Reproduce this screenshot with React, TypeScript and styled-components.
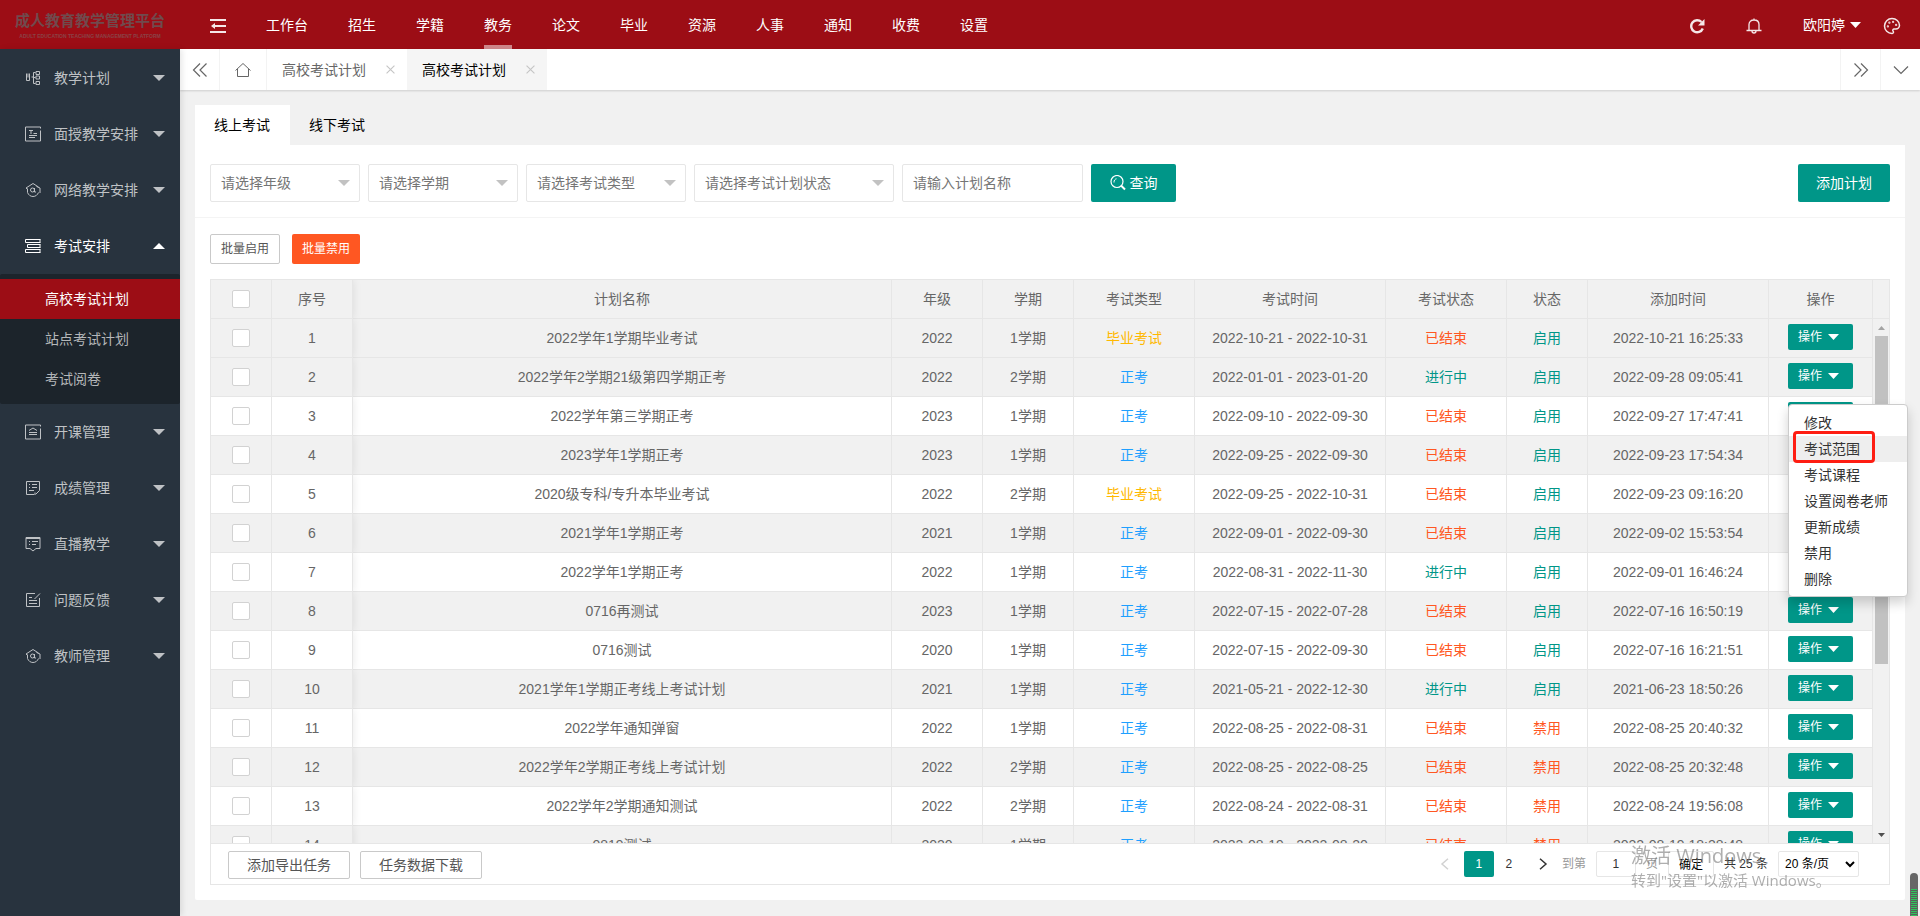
import React from "react";
import styled, { createGlobalStyle, css } from "styled-components";
import { Palette } from "lucide-react";

const RED = "#9c0d15";
const GREEN = "#009688";
const ORANGE = "#ff5722";
const BLUE = "#1e9fff";
const YELLOW = "#ffb800";
const LINE = "#e6e6e6";

const GlobalStyle = createGlobalStyle`
  * { box-sizing: border-box; }
  body {
    margin: 0;
    font: 14px/24px "Liberation Sans", "Noto Sans CJK SC", sans-serif;
    color: #333;
    background: #f1f1f1;
  }
  button, input, select { font: inherit; color: inherit; margin: 0; }
  button { padding: 0; border: 0; background: none; cursor: pointer; white-space: nowrap; }
  a { color: inherit; text-decoration: none; }
  ul { list-style: none; margin: 0; padding: 0; }
`;

const Page = styled.div`
  display: grid;
  grid-template: 49px minmax(0, 1fr) / 180px minmax(0, 1fr);
  height: 100vh;
  min-height: 640px;
`;

const Logo = styled.div`
  background: ${RED};
  color: #704a4d;
  text-align: center;
  padding-top: 11px;
  white-space: nowrap;
  overflow: hidden;
`;
const LogoTitle = styled.div`
  font-size: 15px;
  line-height: 20px;
  font-weight: 700;
`;
const LogoSub = styled.div`
  font-size: 5px;
  line-height: 10px;
  font-weight: 700;
  color: #8a4347;
`;

const Header = styled.header`
  background: ${RED};
  color: #f5e7e8;
  display: flex;
  align-items: stretch;
  justify-content: space-between;
  padding: 0 19px 0 20px;
`;
const HeaderGroup = styled.div`
  display: flex;
  align-items: stretch;
`;
const Fold = styled.button`
  width: 46px;
  padding: 2px 10px 0;
  text-align: left;
  svg { display: block; }
`;
const TopNav = styled.nav`
  display: flex;
`;
const TopLink = styled.a<{ $active?: boolean }>`
  margin: 0 20px;
  padding-top: 13px;
  color: #fff;
  border-bottom: 4px solid ${(p) => (p.$active ? "#cd8689" : "transparent")};
`;
const Tools = styled.div`
  display: flex;
  align-items: center;
  padding-top: 3px;
  gap: 41px;
  svg { display: block; }
`;
const User = styled.button`
  display: flex;
  align-items: center;
  gap: 5px;
  color: #fff;
  padding-bottom: 3px;
`;
const Account = styled.div`
  display: flex;
  align-items: center;
  gap: 22px;
`;

const Side = styled.aside`
  background: #28333e;
  padding-top: 1px;
  overflow: hidden;
  box-shadow: 2px 0 6px rgba(0, 0, 0, 0.1);
  z-index: 1;
`;
const SideItem = styled.a<{ $open?: boolean }>`
  display: grid;
  grid-template-columns: 16px 1fr auto;
  column-gap: 13px;
  align-items: center;
  height: 56px;
  padding: 0 15px 0 25px;
  color: ${(p) => (p.$open ? "#fff" : "#bfc2c5")};
  svg { display: block; }
`;
const SubMenu = styled.ul`
  background: #1c242b;
  padding: 5px 0;
  border-radius: 2px;
`;
const SubLink = styled.a<{ $active?: boolean }>`
  display: block;
  line-height: 40px;
  padding-left: 45px;
  color: ${(p) => (p.$active ? "#fff" : "#b4b7b9")};
  background: ${(p) => (p.$active ? RED : "transparent")};
`;

const Main = styled.main`
  display: flex;
  flex-direction: column;
  min-width: 0;
  min-height: 0;
`;
const PageTabs = styled.div`
  display: flex;
  height: 41px;
  flex: none;
  background: #fff;
  box-shadow: 0 1px 2px rgba(0, 0, 0, 0.15);
`;
const TabIcon = styled.button<{ $w: number; $left?: boolean }>`
  width: ${(p) => p.$w}px;
  display: flex;
  align-items: center;
  justify-content: center;
  color: #666;
  ${(p) => (p.$left ? "border-left" : "border-right")}: 1px solid #f3f3f3;
`;
const PageTab = styled.div<{ $active?: boolean }>`
  display: flex;
  align-items: center;
  gap: 20px;
  padding: 0 12px 0 15px;
  color: ${(p) => (p.$active ? "#000" : "#666")};
  background: ${(p) => (p.$active ? "#f5f5f5" : "#fff")};
`;
const Close = styled.button`
  color: #c5c5c5;
  svg { display: block; }
`;
const Spacer = styled.div`
  flex: 1;
`;

const Content = styled.div`
  flex: 1;
  min-height: 0;
  display: flex;
  flex-direction: column;
  padding: 15px 15px 16px;
`;
const ExamTabs = styled.div`
  display: flex;
  flex: none;
`;
const ExamTab = styled.button<{ $active?: boolean }>`
  height: 40px;
  padding: 0 20px 0 19px;
  color: #000;
  background: ${(p) => (p.$active ? "#fff" : "transparent")};
`;
const Card = styled.section`
  position: relative;
  flex: 1;
  min-height: 0;
  display: flex;
  flex-direction: column;
  background: #fff;
  border-radius: 0 0 2px 2px;
`;
const Filters = styled.form`
  display: flex;
  gap: 8px;
  padding: 19px 15px 15px;
  border-bottom: 1px solid #f4f4f4;
`;
const SelectBox = styled.div<{ $w: number }>`
  display: grid;
  align-items: center;
  width: ${(p) => p.$w}px;
  > * { grid-area: 1 / 1; }
  svg { justify-self: end; margin-right: 10px; color: #c2c2c2; pointer-events: none; }
`;
const field = css`
  height: 38px;
  width: 100%;
  padding: 0 10px;
  border: 1px solid ${LINE};
  border-radius: 2px;
  background: #fff;
  color: #757575;
  outline: 0;
`;
const FilterSelect = styled.select`
  ${field}
  appearance: none;
`;
const FilterInput = styled.input`
  ${field}
  width: 181px;
  &::placeholder { color: #757575; opacity: 1; }
`;
const Primary = styled.button<{ $w: number }>`
  display: flex;
  align-items: center;
  justify-content: center;
  gap: 4px;
  height: 38px;
  width: ${(p) => p.$w}px;
  border-radius: 2px;
  background: ${GREEN};
  color: #fff;
`;

const Batch = styled.div`
  display: flex;
  gap: 12px;
  padding: 16px 15px 15px;
`;
const BatchButton = styled.button<{ $danger?: boolean }>`
  height: 30px;
  padding: 0 10px;
  font-size: 12px;
  border-radius: 2px;
  ${(p) =>
    p.$danger
      ? css`background: ${ORANGE}; color: #fff;`
      : css`border: 1px solid #c9c9c9; color: #555;`}
`;

const Grid = styled.div`
  flex: 1;
  min-height: 0;
  margin: 0 15px 15px;
  border: 1px solid ${LINE};
  display: flex;
  flex-direction: column;
`;
const GridBody = styled.div`
  flex: 1;
  min-height: 0;
  display: flex;
`;
const TableClip = styled.div`
  flex: 1;
  min-width: 0;
  overflow: hidden;
`;
const Table = styled.table`
  width: 100%;
  table-layout: fixed;
  border-collapse: separate;
  border-spacing: 0;
  color: #666;
`;
const Col = styled.col<{ $w?: number }>`
  width: ${(p) => (p.$w ? p.$w + "px" : "auto")};
`;
const Row = styled.tr<{ $shade?: boolean }>`
  background: ${(p) => (p.$shade ? "#f1f1f1" : "#fff")};
`;
const cell = css<{ $pinned?: boolean }>`
  height: 39px;
  padding: 0;
  border-right: 1px solid ${LINE};
  border-bottom: 1px solid ${LINE};
  font-weight: 400;
  text-align: center;
  white-space: nowrap;
  ${(p) =>
    p.$pinned &&
    css`
      box-shadow: 1px 0 8px rgba(0, 0, 0, 0.08);
      clip-path: inset(0 -12px 0 0);
    `}
`;
const Th = styled.th`${cell}`;
const Td = styled.td<{ $color?: string }>`
  ${cell}
  color: ${(p) => p.$color || "#666"};
`;
const Check = styled.input`
  appearance: none;
  display: block;
  width: 18px;
  height: 18px;
  margin: 0 auto;
  border: 1px solid #d2d2d2;
  border-radius: 2px;
  background: #fff;
`;
const RowAction = styled.button`
  display: flex;
  align-items: center;
  justify-content: space-between;
  width: 65px;
  height: 26px;
  margin: 0 auto 2px;
  padding: 0 14px 0 10px;
  border-radius: 2px;
  background: ${GREEN};
  color: #fff;
  font-size: 12px;
`;
const Gutter = styled.div`
  width: 16px;
  display: flex;
  flex-direction: column;
  background: #f1f1f1;
`;
const GutterHead = styled.div`
  height: 39px;
  border-bottom: 1px solid ${LINE};
`;
const ScrollTrack = styled.div`
  flex: 1;
  display: flex;
  flex-direction: column;
  align-items: center;
`;
const ScrollArrow = styled.div<{ $color: string }>`
  height: 17px;
  display: flex;
  align-items: center;
  color: ${(p) => p.$color};
  svg { display: block; }
`;
const ScrollRange = styled.div`
  flex: 1;
  width: 13px;
`;
const Thumb = styled.div`
  height: 67%;
  background: #c1c1c1;
`;

const Footer = styled.footer`
  flex: none;
  height: 41px;
  border-top: 1px solid ${LINE};
  display: flex;
  align-items: flex-start;
  justify-content: space-between;
  padding: 7px 30px 0 17px;
`;
const FooterGroup = styled.div`
  display: flex;
  gap: 10px;
`;
const Export = styled.button`
  height: 28px;
  padding: 0 18px;
  border: 1px solid #c9c9c9;
  border-radius: 2px;
  color: #555;
`;
const Pager = styled.div`
  display: flex;
  align-items: center;
  gap: 10px;
  font-size: 12px;
  line-height: 26px;
`;
const PageButtons = styled.div`
  display: flex;
  align-items: center;
`;
const PageButton = styled.button<{ $active?: boolean; $off?: boolean }>`
  min-width: 30px;
  height: 26px;
  display: flex;
  align-items: center;
  justify-content: center;
  border-radius: 2px;
  background: ${(p) => (p.$active ? GREEN : "none")};
  color: ${(p) => (p.$active ? "#fff" : p.$off ? "#d2d2d2" : "#333")};
`;
const PageStep = styled(PageButton)`
  width: 38px;
`;
const Muted = styled.label`
  display: flex;
  gap: 10px;
  color: #999;
`;
const PageInput = styled.input`
  width: 40px;
  height: 26px;
  padding: 0;
  border: 1px solid ${LINE};
  border-radius: 2px;
  text-align: center;
  color: #333;
`;
const Go = styled.button`
  width: 46px;
  height: 26px;
  border: 1px solid ${LINE};
  border-radius: 2px;
  color: #000;
`;
const PageSize = styled.select`
  width: 81px;
  height: 26px;
  padding: 0 2px;
  border: 1px solid ${LINE};
  border-radius: 2px;
  background: #fff;
  color: #000;
`;

const Menu = styled.ul`
  position: absolute;
  top: 259px;
  right: -3px;
  width: 120px;
  padding: 5px 0 4px;
  background: #fff;
  border: 1px solid #ccc;
  border-radius: 4px;
  box-shadow: 0 6px 12px rgba(0, 0, 0, 0.18);
  z-index: 2;
`;
const MenuItem = styled.button<{ $hover?: boolean }>`
  display: block;
  width: 100%;
  height: 26px;
  padding: 0 15px;
  text-align: left;
  color: #333;
  background: ${(p) => (p.$hover ? "#eee" : "none")};
`;
const Mark = styled.div`
  position: absolute;
  top: 26px;
  left: 4px;
  width: 82px;
  height: 32px;
  border: 3px solid #fe1d12;
  border-radius: 4px;
  pointer-events: none;
`;
const Watermark = styled.div`
  position: fixed;
  right: 92px;
  bottom: 24px;
  width: 197px;
  font-family: "Open Sans", "Noto Sans CJK SC", sans-serif;
  color: rgba(120, 120, 120, 0.6);
  white-space: nowrap;
  pointer-events: none;
  z-index: 3;
`;
const WatermarkTitle = styled.div`
  font-size: 20px;
  line-height: 24px;
`;
const WatermarkText = styled.div`
  font-size: 15px;
  line-height: 24px;
`;
const Meter = styled.div`
  position: fixed;
  right: 2px;
  bottom: 0;
  width: 8px;
  height: 43px;
  padding: 16px 1px 0;
  background: #666;
  border-radius: 4px 4px 0 0;
  z-index: 3;
  &::before {
    content: "";
    display: block;
    height: 100%;
    background: repeating-linear-gradient(#2fc55c 0 1px, #55605a 1px 2px);
  }
`;

const Caret = ({ up, w = 12, h = 6 }: { up?: boolean; w?: number; h?: number }) => (
  <svg width={w} height={h} viewBox="0 0 12 6" preserveAspectRatio="none" fill="currentColor" aria-hidden="true">
    <path d={up ? "M0 6 6 0l6 6z" : "M0 0h12L6 6z"} />
  </svg>
);

const Line = ({ d, size = 16, w = 1, children }: { d: string; size?: number; w?: number; children?: React.ReactNode }) => (
  <svg width={size} height={size} viewBox="0 0 16 16" fill="none" stroke="currentColor" strokeWidth={w} aria-hidden="true">
    <path d={d} />
    {children}
  </svg>
);

const icons = {
  tree: "M1.500 3.500v7h3v-7M3 3.500v4M6.500 7h2M8.500 2.500v11M8.500 2.500h2M8.500 7.500h2M8.500 13.500h2M11 1.500h3.500v3H11zM11 6h3.500v3H11zM11 11.500h3.500v3H11z",
  text: "M15.500 4.500v10.500h-15v-14h15v1.500M4 4.500h4M6 4.500V8M8.500 7.500H12M4 9.500h8M4 11.500h6",
  books: "M15.500 1.500H.500v3h15M15.500 6.500H2.500v3h13M15.500 11.500H.500v3h15M15 1.500v3M15 6.500v3M15 11.500v3",
  course: "M15.500 4.500v10.500h-15v-14h15v1.500M4 6.500 8 4l4 2.500M4 8.500h8M4 10.500h8",
  score: "M9.500 14.500h-8v-13h13v9l-4 4M4 4.500h1M7 4.500h5M4 7.500h1M7 7.500h5M4 10.500h5M10 14.500v-2",
  live: "M5 12.500H1V1.500h14v11h-4L8 15l-3-2.500M1 2.500h14M4 5.500h1M7 5.500h6M4 8.500h1M7 8.500h4",
  feedback: "M10 1.500H1.500v13h13V6M15 1.500l-5.500 5.500M4 5.500h3M4 8.500h8M4 11.500h8",
};

const Cap = () => (
  <Line d="M2.500 7.500 1 6l7-4.500L13.500 5M2.500 6.500v4c1 2.500 3 4 5.500 4s4.500-1.500 5.500-4M11.500 4.500l3.500 1.500v5">
    <circle cx="7.500" cy="8" r="2" />
    <path d="M9.500 6v4h1.500" />
  </Line>
);

const topLinks = ["工作台", "招生", "学籍", "教务", "论文", "毕业", "资源", "人事", "通知", "收费", "设置"];

const sideBefore: [string, React.ReactNode][] = [
  ["教学计划", <Line d={icons.tree} />],
  ["面授教学安排", <Line d={icons.text} />],
  ["网络教学安排", <Cap />],
];
const sideAfter: [string, React.ReactNode][] = [
  ["开课管理", <Line d={icons.course} />],
  ["成绩管理", <Line d={icons.score} />],
  ["直播教学", <Line d={icons.live} />],
  ["问题反馈", <Line d={icons.feedback} />],
  ["教师管理", <Cap />],
];

const filters: [string, number][] = [
  ["请选择年级", 150],
  ["请选择学期", 150],
  ["请选择考试类型", 160],
  ["请选择考试计划状态", 200],
];

const heads = ["序号", "计划名称", "年级", "学期", "考试类型", "考试时间", "考试状态", "状态", "添加时间", "操作"];
const widths = [61, 81, 0, 91, 91, 121, 191, 121, 81, 181, 104];

const rows = [
  ["2022学年1学期毕业考试", "2022", "1学期", "毕业考试", "2022-10-21 - 2022-10-31", "已结束", "启用", "2022-10-21 16:25:33"],
  ["2022学年2学期21级第四学期正考", "2022", "2学期", "正考", "2022-01-01 - 2023-01-20", "进行中", "启用", "2022-09-28 09:05:41"],
  ["2022学年第三学期正考", "2023", "1学期", "正考", "2022-09-10 - 2022-09-30", "已结束", "启用", "2022-09-27 17:47:41"],
  ["2023学年1学期正考", "2023", "1学期", "正考", "2022-09-25 - 2022-09-30", "已结束", "启用", "2022-09-23 17:54:34"],
  ["2020级专科/专升本毕业考试", "2022", "2学期", "毕业考试", "2022-09-25 - 2022-10-31", "已结束", "启用", "2022-09-23 09:16:20"],
  ["2021学年1学期正考", "2021", "1学期", "正考", "2022-09-01 - 2022-09-30", "已结束", "启用", "2022-09-02 15:53:54"],
  ["2022学年1学期正考", "2022", "1学期", "正考", "2022-08-31 - 2022-11-30", "进行中", "启用", "2022-09-01 16:46:24"],
  ["0716再测试", "2023", "1学期", "正考", "2022-07-15 - 2022-07-28", "已结束", "启用", "2022-07-16 16:50:19"],
  ["0716测试", "2020", "1学期", "正考", "2022-07-15 - 2022-09-30", "已结束", "启用", "2022-07-16 16:21:51"],
  ["2021学年1学期正考线上考试计划", "2021", "1学期", "正考", "2021-05-21 - 2022-12-30", "进行中", "启用", "2021-06-23 18:50:26"],
  ["2022学年通知弹窗", "2022", "1学期", "正考", "2022-08-25 - 2022-08-31", "已结束", "禁用", "2022-08-25 20:40:32"],
  ["2022学年2学期正考线上考试计划", "2022", "2学期", "正考", "2022-08-25 - 2022-08-25", "已结束", "禁用", "2022-08-25 20:32:48"],
  ["2022学年2学期通知测试", "2022", "2学期", "正考", "2022-08-24 - 2022-08-31", "已结束", "禁用", "2022-08-24 19:56:08"],
  ["0819测试", "2020", "1学期", "正考", "2022-08-19 - 2022-08-20", "已结束", "禁用", "2022-08-19 18:28:48"],
];

const tone: Record<string, string> = {
  毕业考试: YELLOW,
  正考: BLUE,
  已结束: ORANGE,
  进行中: GREEN,
  启用: GREEN,
  禁用: ORANGE,
};

const menu = ["修改", "考试范围", "考试课程", "设置阅卷老师", "更新成绩", "禁用", "删除"];

const SideEntry = ({ label, icon }: { label: string; icon: React.ReactNode }) => (
  <SideItem href="#">
    {icon}
    <span>{label}</span>
    <Caret />
  </SideItem>
);

export default function App() {
  return (
    <>
      <GlobalStyle />
      <Page>
        <Logo>
          <LogoTitle>成人教育教学管理平台</LogoTitle>
          <LogoSub>ADULT EDUCATION TEACHING MANAGEMENT PLATFORM</LogoSub>
        </Logo>
        <Header>
          <HeaderGroup>
            <Fold aria-label="收起菜单">
              <Line size={16} w={2} d="M0 2h16M7 8h9M0 14h16">
                <path d="M1 8l4-3v6z" fill="currentColor" stroke="none" />
                <path d="M4 8h3" />
              </Line>
            </Fold>
            <TopNav>
              {topLinks.map((t) => (
                <TopLink key={t} href="#" $active={t === "教务"}>{t}</TopLink>
              ))}
            </TopNav>
          </HeaderGroup>
          <Tools>
            <button aria-label="刷新">
              <Line size={16} w={2.4} d="M13.800 10.500A6 6 0 1 1 12.500 4">
                <path d="M15.500 1v6.500H9z" fill="currentColor" stroke="none" />
              </Line>
            </button>
            <button aria-label="消息">
              <Line size={16} d="M.5 12.500h15M3 12.500V6.500C3 3.500 5 2 8 2s5 1.500 5 4.500v6M8 2V.500M6 13c0 1.500.800 2 2 2s2-.500 2-2" w={1.3} />
            </button>
            <Account>
              <User>欧阳婷 <Caret w={11} /></User>
              <button aria-label="主题"><Palette size={18} strokeWidth={2} /></button>
            </Account>
          </Tools>
        </Header>

        <Side>
          {sideBefore.map(([label, icon]) => <SideEntry key={label} label={label} icon={icon} />)}
          <SideItem href="#" $open>
            <Line d={icons.books} />
            <span>考试安排</span>
            <Caret up />
          </SideItem>
          <SubMenu>
            <li><SubLink href="#" $active>高校考试计划</SubLink></li>
            <li><SubLink href="#">站点考试计划</SubLink></li>
            <li><SubLink href="#">考试阅卷</SubLink></li>
          </SubMenu>
          {sideAfter.map(([label, icon]) => <SideEntry key={label} label={label} icon={icon} />)}
        </Side>

        <Main>
          <PageTabs>
            <TabIcon $w={40} aria-label="向左"><Line d="M8 1.500 1.500 8 8 14.500M14.500 1.500 8 8l6.500 6.500" w={1.2} /></TabIcon>
            <TabIcon $w={47} aria-label="首页"><Line d="M.5 8.500 8 1.500l7.500 7M2.500 7v7.500h11V7" /></TabIcon>
            {[false, true].map((active) => (
              <PageTab key={String(active)} $active={active}>
                高校考试计划
                <Close aria-label="关闭"><Line size={9} w={2} d="M1 1l14 14M15 1 1 15" /></Close>
              </PageTab>
            ))}
            <Spacer />
            <TabIcon $w={40} $left aria-label="向右"><Line d="M8 1.500 14.500 8 8 14.500M1.500 1.500 8 8l-6.500 6.500" w={1.2} /></TabIcon>
            <TabIcon $w={40} $left aria-label="更多"><Line d="M1 4.500l7 7 7-7" w={1.2} /></TabIcon>
          </PageTabs>

          <Content>
            <ExamTabs>
              <ExamTab $active>线上考试</ExamTab>
              <ExamTab>线下考试</ExamTab>
            </ExamTabs>
            <Card>
              <Filters onSubmit={(e) => e.preventDefault()}>
                {filters.map(([label, w]) => (
                  <SelectBox key={label} $w={w}>
                    <FilterSelect aria-label={label}><option>{label}</option></FilterSelect>
                    <Caret />
                  </SelectBox>
                ))}
                <FilterInput placeholder="请输入计划名称" aria-label="计划名称" />
                <Primary $w={85}>
                  <Line d="M11 10.500l4 4" w={2}>
                    <circle cx="7" cy="6.500" r="6" strokeWidth="1.200" />
                    <path d="M4 7.500C3.800 5.500 5 4 6.500 3.800" strokeWidth="1" />
                  </Line>
                  查询
                </Primary>
                <Spacer />
                <Primary $w={92} type="button">添加计划</Primary>
              </Filters>
              <Batch>
                <BatchButton>批量启用</BatchButton>
                <BatchButton $danger>批量禁用</BatchButton>
              </Batch>
              <Grid>
                <GridBody>
                  <TableClip>
                    <Table>
                      <colgroup>
                        {widths.map((w, i) => <Col key={i} $w={w} />)}
                      </colgroup>
                      <thead>
                        <Row $shade>
                          <Th><Check type="checkbox" aria-label="全选" /></Th>
                          {heads.map((h, i) => <Th key={h} $pinned={i === 0}>{h}</Th>)}
                        </Row>
                      </thead>
                      <tbody>
                        {rows.map((r, i) => (
                          <Row key={r[7]} $shade={i === 0 || i % 2 === 1}>
                            <Td><Check type="checkbox" aria-label={`选择${i + 1}`} /></Td>
                            <Td $pinned>{i + 1}</Td>
                            {r.map((v, c) => <Td key={c} $color={tone[v]}>{v}</Td>)}
                            <Td><RowAction>操作<Caret w={11} h={6} /></RowAction></Td>
                          </Row>
                        ))}
                      </tbody>
                    </Table>
                  </TableClip>
                  <Gutter>
                    <GutterHead />
                    <ScrollTrack>
                      <ScrollArrow $color="#a3a3a3"><Caret up w={7} h={4} /></ScrollArrow>
                      <ScrollRange><Thumb /></ScrollRange>
                      <ScrollArrow $color="#505050"><Caret w={7} h={4} /></ScrollArrow>
                    </ScrollTrack>
                  </Gutter>
                </GridBody>
                <Footer>
                  <FooterGroup>
                    <Export>添加导出任务</Export>
                    <Export>任务数据下载</Export>
                  </FooterGroup>
                  <Pager>
                    <PageButtons>
                      <PageStep $off aria-label="上一页"><Line size={12} w={2} d="M12 1 4 8l8 7" /></PageStep>
                      <PageButton $active>1</PageButton>
                      <PageButton>2</PageButton>
                      <PageStep aria-label="下一页"><Line size={12} w={2} d="M4 1l8 7-8 7" /></PageStep>
                      <Muted>到第<PageInput defaultValue="1" />页</Muted>
                    </PageButtons>
                    <Go>确定</Go>
                    <span>共 25 条</span>
                    <PageSize aria-label="每页条数"><option>20 条/页</option></PageSize>
                  </Pager>
                </Footer>
              </Grid>
              <Menu>
                {menu.map((m) => (
                  <li key={m}><MenuItem $hover={m === "考试范围"}>{m}</MenuItem></li>
                ))}
                <Mark />
              </Menu>
            </Card>
          </Content>
        </Main>
      </Page>
      <Watermark>
        <WatermarkTitle>激活 Windows</WatermarkTitle>
        <WatermarkText>转到"设置"以激活 Windows。</WatermarkText>
      </Watermark>
      <Meter />
    </>
  );
}
